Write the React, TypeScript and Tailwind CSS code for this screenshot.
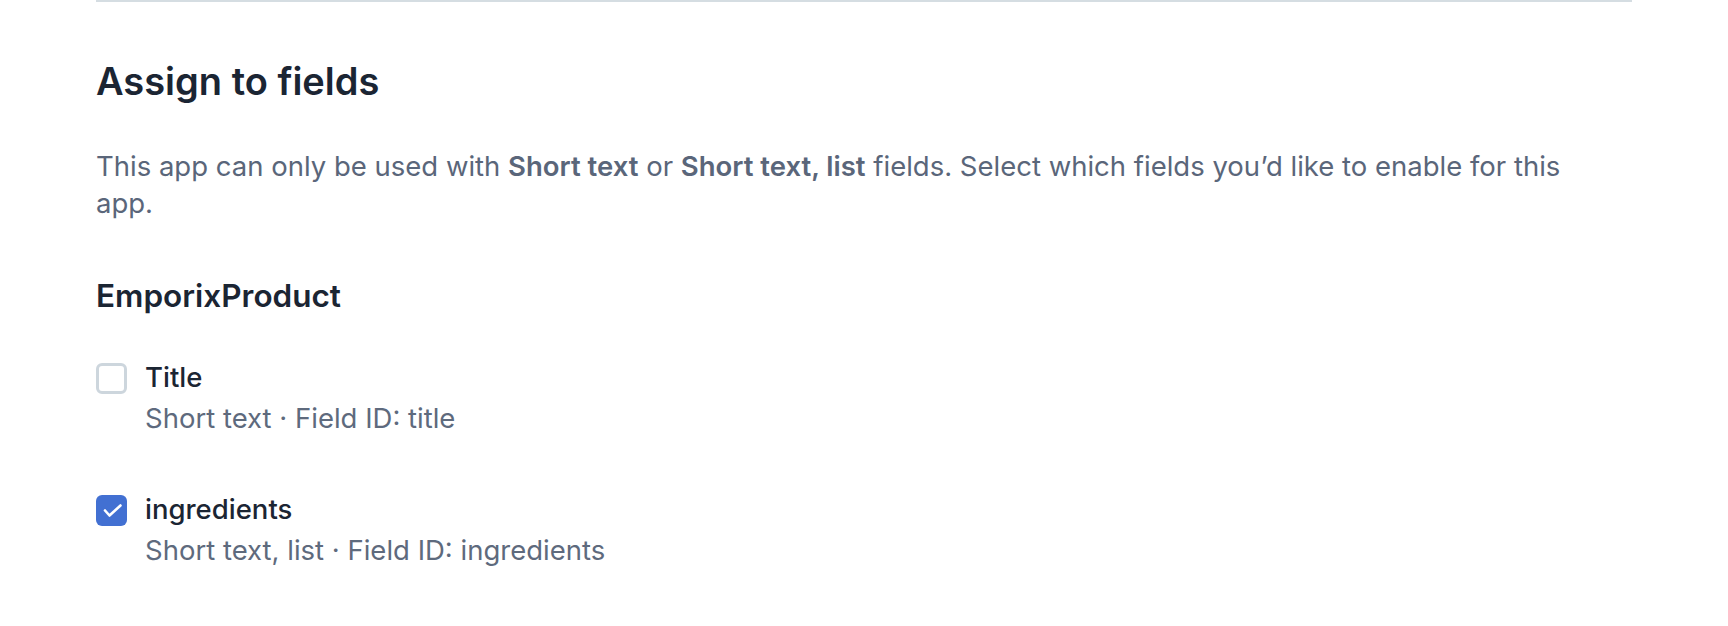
import React from "react";

function Checkbox({ checked }: { checked: boolean }) {
  if (checked) {
    return (
      <div className="mt-[4px] flex h-[31px] w-[31px] shrink-0 items-center justify-center rounded-[6px] bg-[#4270d2]">
        <svg width="31" height="31" viewBox="0 0 31 31" fill="none">
          <path d="M9 15.5 L13.5 20.5 L24.5 10.5" stroke="white" strokeWidth="2.6" strokeLinecap="round" strokeLinejoin="round" />
        </svg>
      </div>
    );
  }
  return <div className="mt-[4px] h-[31px] w-[31px] shrink-0 rounded-[6px] border-[3px] border-[#cdd6dd] bg-white" />;
}

function FieldRow({ label, desc, checked }: { label: string; desc: string; checked: boolean }) {
  return (
    <div className="flex gap-[18px]">
      <Checkbox checked={checked} />
      <div className="flex flex-col">
        <div className="text-[27.5px] font-medium leading-[36px] text-[#1b2533]">{label}</div>
        <div className="mt-[5px] text-[27.5px] leading-[36px] text-[#5e6a7d]">{desc}</div>
      </div>
    </div>
  );
}

export default function App() {
  return (
    <div className="min-h-screen bg-white px-24" style={{ fontFamily: "Inter, 'Noto Sans', sans-serif" }}>
      <div className="border-t-2 border-[#d5dde2]">
        <h2 className="mt-[56px] text-[38px] font-semibold leading-[46px] text-[#1b2533]">
          Assign to fields
        </h2>
        <p className="mt-[44px] max-w-[1500px] text-[27.5px] leading-[37px] text-[#5a667a]">
          This app can only be used with <strong className="font-semibold">Short text</strong> or{" "}
          <strong className="font-semibold">Short text, list</strong> fields. Select which fields you’d like to enable for this app.
        </p>
        <h3 className="mt-[55px] text-[31.5px] font-semibold leading-[38px] text-[#1b2533]">EmporixProduct</h3>
        <div className="mt-[44px] flex flex-col gap-[55px]">
          <FieldRow label="Title" desc="Short text · Field ID: title" checked={false} />
          <FieldRow label="ingredients" desc="Short text, list · Field ID: ingredients" checked={true} />
        </div>
      </div>
    </div>
  );
}
